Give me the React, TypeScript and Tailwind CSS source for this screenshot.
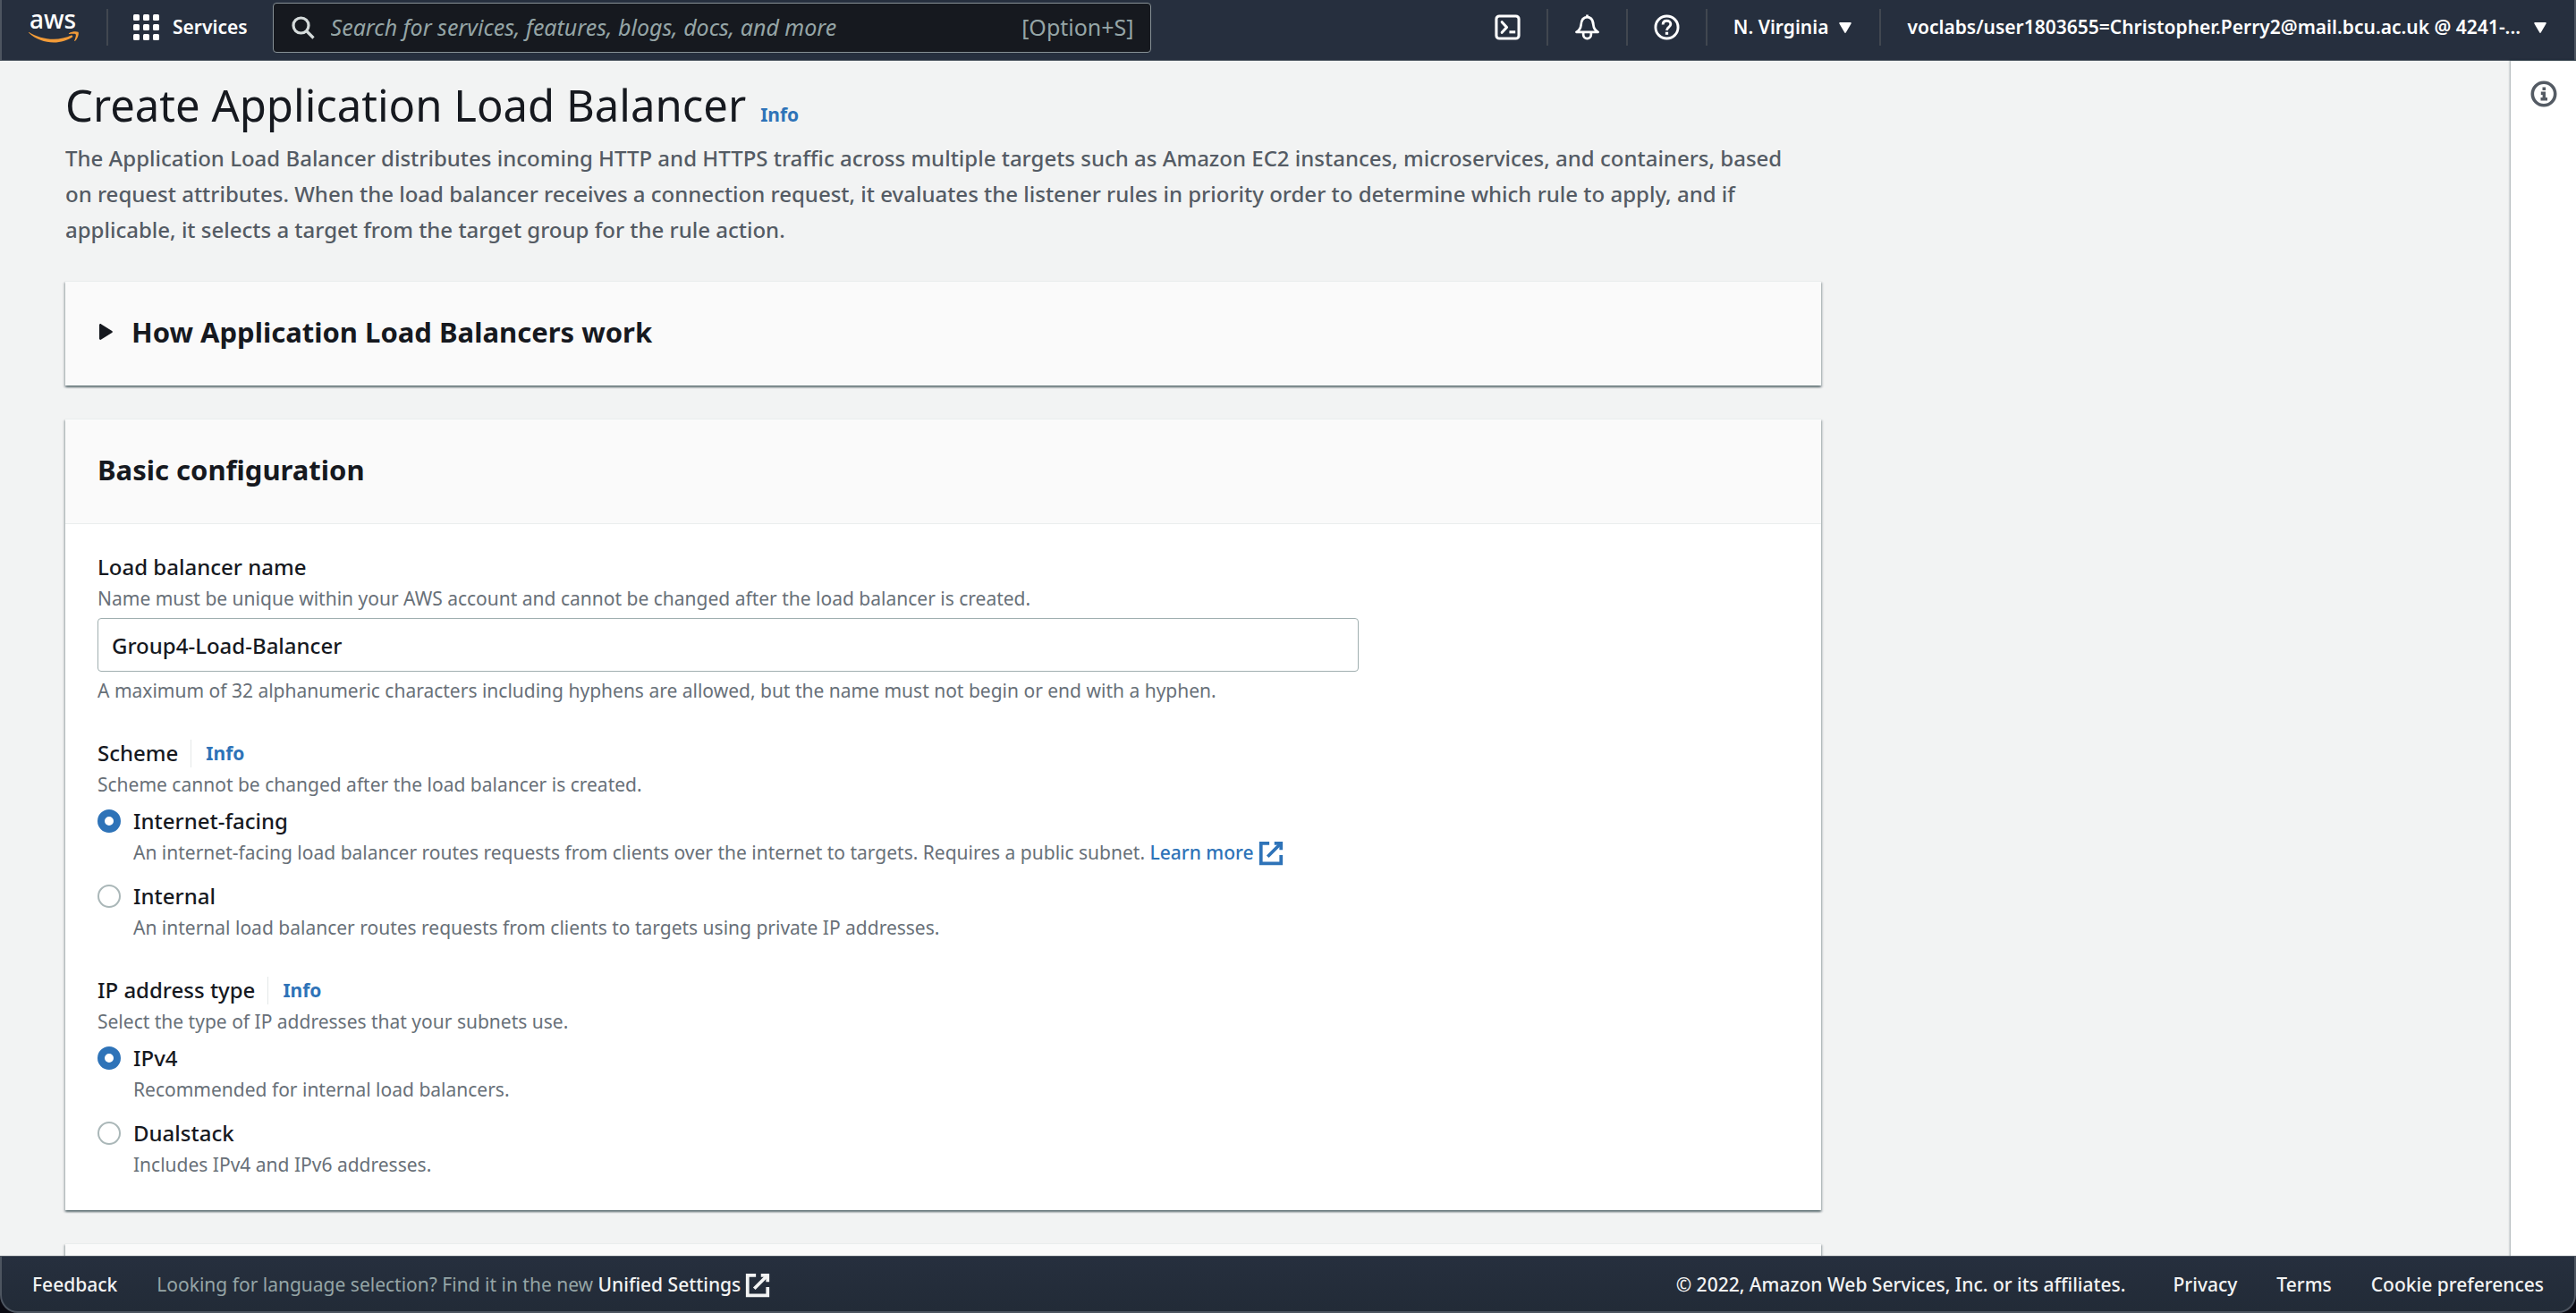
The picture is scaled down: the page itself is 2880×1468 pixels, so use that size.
import { useState } from "react";
import type { ReactNode } from "react";

function ExternalIcon({ className }: { className: string }) {
  return (
    <svg viewBox="0 0 16 16" fill="none" stroke="currentColor" strokeWidth="2" className={className} aria-hidden="true">
      <path d="M10 2h4v4" />
      <path d="M6 10l8-8" />
      <path d="M14 9.05V14H2V2h5" />
    </svg>
  );
}

function AwsLogo() {
  return (
    <svg viewBox="0 -11 58 60" className="h-[60px] w-[58px]" role="img" aria-label="aws">
      <text x="28" y="20" textAnchor="middle" fill="#fff" fontSize="28" fontWeight="500" fontFamily="Noto Sans, sans-serif">
        aws
      </text>
      <path d="M1 24.500C9 32 19 35.500 29 35.500c8 0 16-2.500 21.500-6.500l-1.200-1.800C43 30 36 31.800 29 31.800 19 31.800 9 28.800 1.400 24c-.5-.2-.7.200-.4.500z" fill="#f29b38" />
      <path d="M46 25.200c3-2 8.500-2.400 10.400-1.400 1.300 1-.3 7.500-3.400 10-.5.400-1 .2-.8-.4.700-1.900 2.200-6 1.500-7-.8-1-4.900-.6-7-.4-.8.100-1-.4-.7-.8z" fill="#f29b38" />
    </svg>
  );
}

function Divider() {
  return <span className="h-[41px] w-0.5 shrink-0 bg-[#414750]" />;
}

function Caret() {
  return (
    <svg viewBox="0 0 14 12" className="h-3 w-3.5" fill="currentColor" aria-hidden="true">
      <path d="M1 0h12a.8.8 0 0 1 .7 1.200L7.700 11.500a.8.8 0 0 1-1.400 0L.3 1.200A.8.8 0 0 1 1 0z" />
    </svg>
  );
}

function TopBar() {
  return (
    <header className="flex h-[68px] shrink-0 items-start border-x-2 border-b border-[#4d5560] bg-[#262f3e] text-[21px] font-semibold text-white">
      <div className="flex h-[61px] min-w-0 flex-1 items-center">
        <a href="#home" className="ml-[29px]">
          <AwsLogo />
        </a>
        <span className="ml-[30px] flex">
          <Divider />
        </span>
        <button className="ml-7 flex items-center gap-[15px]">
          <svg viewBox="0 0 29 29" className="size-[29px]" fill="currentColor" aria-hidden="true">
            {[0, 11, 22].map((y) => [0, 11, 22].map((x) => <rect key={`${x}-${y}`} x={x} y={y} width="7" height="7" rx="1.500" />))}
          </svg>
          Services
        </button>
        <label className="ml-7 flex h-14 max-w-[982px] flex-1 items-center rounded border border-[#879196] bg-[#16191f] pr-[18px] pl-5 text-[25px] font-normal text-[#95a5a6]">
          <svg viewBox="0 0 26 26" className="size-[26px] shrink-0" fill="none" stroke="#d5dbdb" strokeWidth="3.200" aria-hidden="true">
            <circle cx="10.500" cy="10.500" r="8.500" />
            <path d="M16.500 16.500l8 8" />
          </svg>
          <input
            type="text"
            aria-label="Search"
            placeholder="Search for services, features, blogs, docs, and more"
            className="ml-[18px] min-w-0 flex-1 bg-transparent italic outline-none placeholder:text-[#95a5a6]"
          />
          <span>[Option+S]</span>
        </label>
        <div className="ml-auto flex items-center">
          <button aria-label="CloudShell">
            <svg viewBox="0 0 30 30" className="size-[29px]" fill="none" stroke="currentColor" strokeWidth="3.200" strokeLinejoin="round" aria-hidden="true">
              <rect x="2" y="2" width="26" height="26" rx="3.500" />
              <path d="M8.500 9l5.500 6-5.500 6" strokeLinecap="round" />
              <path d="M17 20.500h7" />
            </svg>
          </button>
          <span className="mx-[29px] flex">
            <Divider />
          </span>
          <button aria-label="Notifications">
            <svg viewBox="0 0 30 30" className="size-[29px]" fill="none" stroke="currentColor" strokeWidth="2.800" strokeLinejoin="round" aria-hidden="true">
              <path d="M15 0.500v3" />
              <path d="M2.500 20.500c3.500-2 5-4.500 5.300-8C8.200 7 10.500 3.300 15 3.300s6.800 3.700 7.200 9.200c.3 3.500 1.800 6 5.300 8z" />
              <path d="M10.500 21v2.500a4.500 4.500 0 0 0 9 0V21" />
            </svg>
          </button>
          <span className="mx-[29px] flex">
            <Divider />
          </span>
          <button aria-label="Help">
            <svg viewBox="0 0 30 30" className="size-[29px]" fill="none" stroke="currentColor" strokeWidth="3" aria-hidden="true">
              <circle cx="15" cy="15" r="13" />
              <path d="M10.500 12c0-3 2-4.500 4.500-4.500s4.500 1.500 4.500 4c0 3.500-4.500 3.300-4.500 7" />
              <path d="M13.300 22h3.400" strokeWidth="3.200" />
            </svg>
          </button>
          <span className="ml-[29px] flex">
            <Divider />
          </span>
          <button className="ml-[29px] flex items-center gap-3">
            N. Virginia <Caret />
          </button>
          <span className="ml-[31px] flex">
            <Divider />
          </span>
          <button className="mr-[31px] ml-[29px] flex items-center gap-[15px]">
            voclabs/user1803655=Christopher.Perry2@mail.bcu.ac.uk @ 4241-...
            <Caret />
          </button>
        </div>
      </div>
    </header>
  );
}

function Card({ children }: { children?: ReactNode }) {
  return (
    <section className="border-t border-[#eaeded] bg-white shadow-[0_2px_2px_0_rgba(0,28,36,0.45),2px_2px_2px_0_rgba(0,28,36,0.14),-2px_2px_2px_0_rgba(0,28,36,0.14)]">
      {children}
    </section>
  );
}

const hint = "text-[21px] leading-8 text-[#687078]";
const fieldLabel = "text-2xl leading-[38px] font-medium";
const cardHeader = "bg-[#fafafa] px-9 pt-8 pb-9 text-[31px] leading-[48px] font-bold";

interface Option {
  value: string;
  text: ReactNode;
}

function RadioGroup({ legend, description, name, options }: { legend: string; description: string; name: string; options: Option[] }) {
  const [selected, setSelected] = useState(options[0].value);
  return (
    <fieldset>
      <legend className="flex items-center text-2xl leading-[38px] font-medium">
        {legend}
        <span className="mr-4 ml-[14px] h-[31px] w-px bg-[#e4e8e8]" />
        <a href="#info" className="text-[21px] font-bold text-[#2e73b8]">
          Info
        </a>
      </legend>
      <p className={hint}>{description}</p>
      <div className="mt-1.5 flex flex-col gap-3.5">
        {options.map((o) => (
          <div key={o.value} className="grid grid-cols-[26px_1fr] gap-x-3.5">
            <input
              type="radio"
              id={o.value}
              name={name}
              checked={selected === o.value}
              onChange={() => setSelected(o.value)}
              className="size-[26px] appearance-none self-center rounded-full border-2 border-[#aab7b8] bg-white checked:border-[8px] checked:border-[#2e73b8]"
            />
            <label htmlFor={o.value} className={fieldLabel}>
              {o.value}
            </label>
            <p className={`col-start-2 ${hint}`}>{o.text}</p>
          </div>
        ))}
      </div>
    </fieldset>
  );
}

function BottomBar() {
  return (
    <div className="relative shrink-0 bg-[#0a0a12]">
      <footer className="flex h-16 items-center rounded-b-[20px] border-2 border-t border-[#4d5560] bg-linear-to-b from-[#262f3e] to-[#222b37] px-[34px] pt-0.5 text-[21px] font-medium text-[#f2f3f3]">
        <button>Feedback</button>
        <p className="ml-[44px] flex items-center">
          <span>
            <span className="font-normal text-[#95a5a6]">Looking for language selection? Find it in the new </span>
            <a href="#settings">Unified Settings</a>
          </span>
          <ExternalIcon className="ml-1 size-[30px]" />
        </p>
        <span className="ml-auto">© 2022, Amazon Web Services, Inc. or its affiliates.</span>
        <a href="#privacy" className="ml-[53px]">
          Privacy
        </a>
        <a href="#terms" className="ml-[44px]">
          Terms
        </a>
        <a href="#cookies" className="ml-[44px]">
          Cookie preferences
        </a>
      </footer>
    </div>
  );
}

export default function App() {
  const [name, setName] = useState("Group4-Load-Balancer");
  return (
    <div className="flex h-screen flex-col overflow-hidden bg-[#f2f3f3] font-['Noto_Sans',sans-serif] text-[#16191f]">
      <TopBar />
      <div className="flex min-h-0 flex-1">
        <main className="min-w-0 flex-1 overflow-hidden pt-[19px] pl-[73px]">
          <div className="max-w-[1963px]">
            <h1 className="text-[49px] leading-[60px]">
              Create Application Load Balancer
              <a href="#info" className="ml-4 text-[21px] leading-8 font-bold text-[#2e73b8]">
                Info
              </a>
            </h1>
            <p className="mt-2.5 pr-6 text-2xl leading-10 font-medium text-[#545b64]">
              The Application Load Balancer distributes incoming HTTP and HTTPS traffic across multiple targets such as Amazon EC2 instances, microservices, and containers, based on request attributes. When the load balancer receives a connection request, it evaluates the listener rules in priority order to determine which rule to apply, and if applicable, it selects a target from the target group for the rule action.
            </p>
            <div className="mt-[37px] flex flex-col gap-[37px]">
              <Card>
                <h2 className={cardHeader}>
                  <button className="flex items-center gap-[21px] pl-0.5">
                    <svg viewBox="0 0 15 18" className="h-[18px] w-[15px]" fill="currentColor" aria-hidden="true">
                      <path d="M0 1.500C0 .3 1.200-.3 2.200.4l12 7.600c.9.600.9 1.500 0 2.100l-12 7.500C1.200 18.300 0 17.700 0 16.500z" />
                    </svg>
                    How Application Load Balancers work
                  </button>
                </h2>
              </Card>
              <Card>
                <h2 className={`border-b border-[#eaeded] ${cardHeader}`}>Basic configuration</h2>
                <div className="flex flex-col gap-[35px] px-9 pt-[29px] pb-[35px]">
                  <div>
                    <label htmlFor="lb-name" className={`block ${fieldLabel}`}>
                      Load balancer name
                    </label>
                    <p className={hint}>Name must be unique within your AWS account and cannot be changed after the load balancer is created.</p>
                    <input
                      id="lb-name"
                      type="text"
                      value={name}
                      onChange={(e) => setName(e.target.value)}
                      className="mt-1.5 block h-[60px] w-full max-w-[1410px] rounded border border-[#a0afb0] bg-white px-[15px] text-2xl font-medium outline-none"
                    />
                    <p className={`mt-[5px] ${hint}`}>A maximum of 32 alphanumeric characters including hyphens are allowed, but the name must not begin or end with a hyphen.</p>
                  </div>
                  <RadioGroup
                    legend="Scheme"
                    description="Scheme cannot be changed after the load balancer is created."
                    name="scheme"
                    options={[
                      {
                        value: "Internet-facing",
                        text: (
                          <>
                            An internet-facing load balancer routes requests from clients over the internet to targets. Requires a public subnet.{" "}
                            <a href="#learn" className="font-medium text-[#2e73b8]">
                              Learn more
                              <ExternalIcon className="-mt-1.5 -mb-1 ml-1 inline size-[30px]" />
                            </a>
                          </>
                        ),
                      },
                      { value: "Internal", text: "An internal load balancer routes requests from clients to targets using private IP addresses." },
                    ]}
                  />
                  <RadioGroup
                    legend="IP address type"
                    description="Select the type of IP addresses that your subnets use."
                    name="ip-type"
                    options={[
                      { value: "IPv4", text: "Recommended for internal load balancers." },
                      { value: "Dualstack", text: "Includes IPv4 and IPv6 addresses." },
                    ]}
                  />
                </div>
              </Card>
              <Card>
                <div className="h-24 bg-[#fafafa]" />
              </Card>
            </div>
          </div>
        </main>
        <aside className="flex w-[73px] shrink-0 justify-center bg-white pt-[22px] shadow-[0_0_2px_1px_rgba(0,28,36,0.35)]">
          <button aria-label="Open help panel" className="self-start text-[#545b64]">
            <svg viewBox="0 0 30 30" className="size-[30px]" fill="none" stroke="currentColor" strokeWidth="3.600" aria-hidden="true">
              <circle cx="15" cy="15" r="12.700" />
              <path d="M13.500 9.200h3.600M11.800 14.300h3.500v6.700M11.500 20.800h7.500" strokeWidth="3.400" />
            </svg>
          </button>
        </aside>
      </div>
      <BottomBar />
    </div>
  );
}
